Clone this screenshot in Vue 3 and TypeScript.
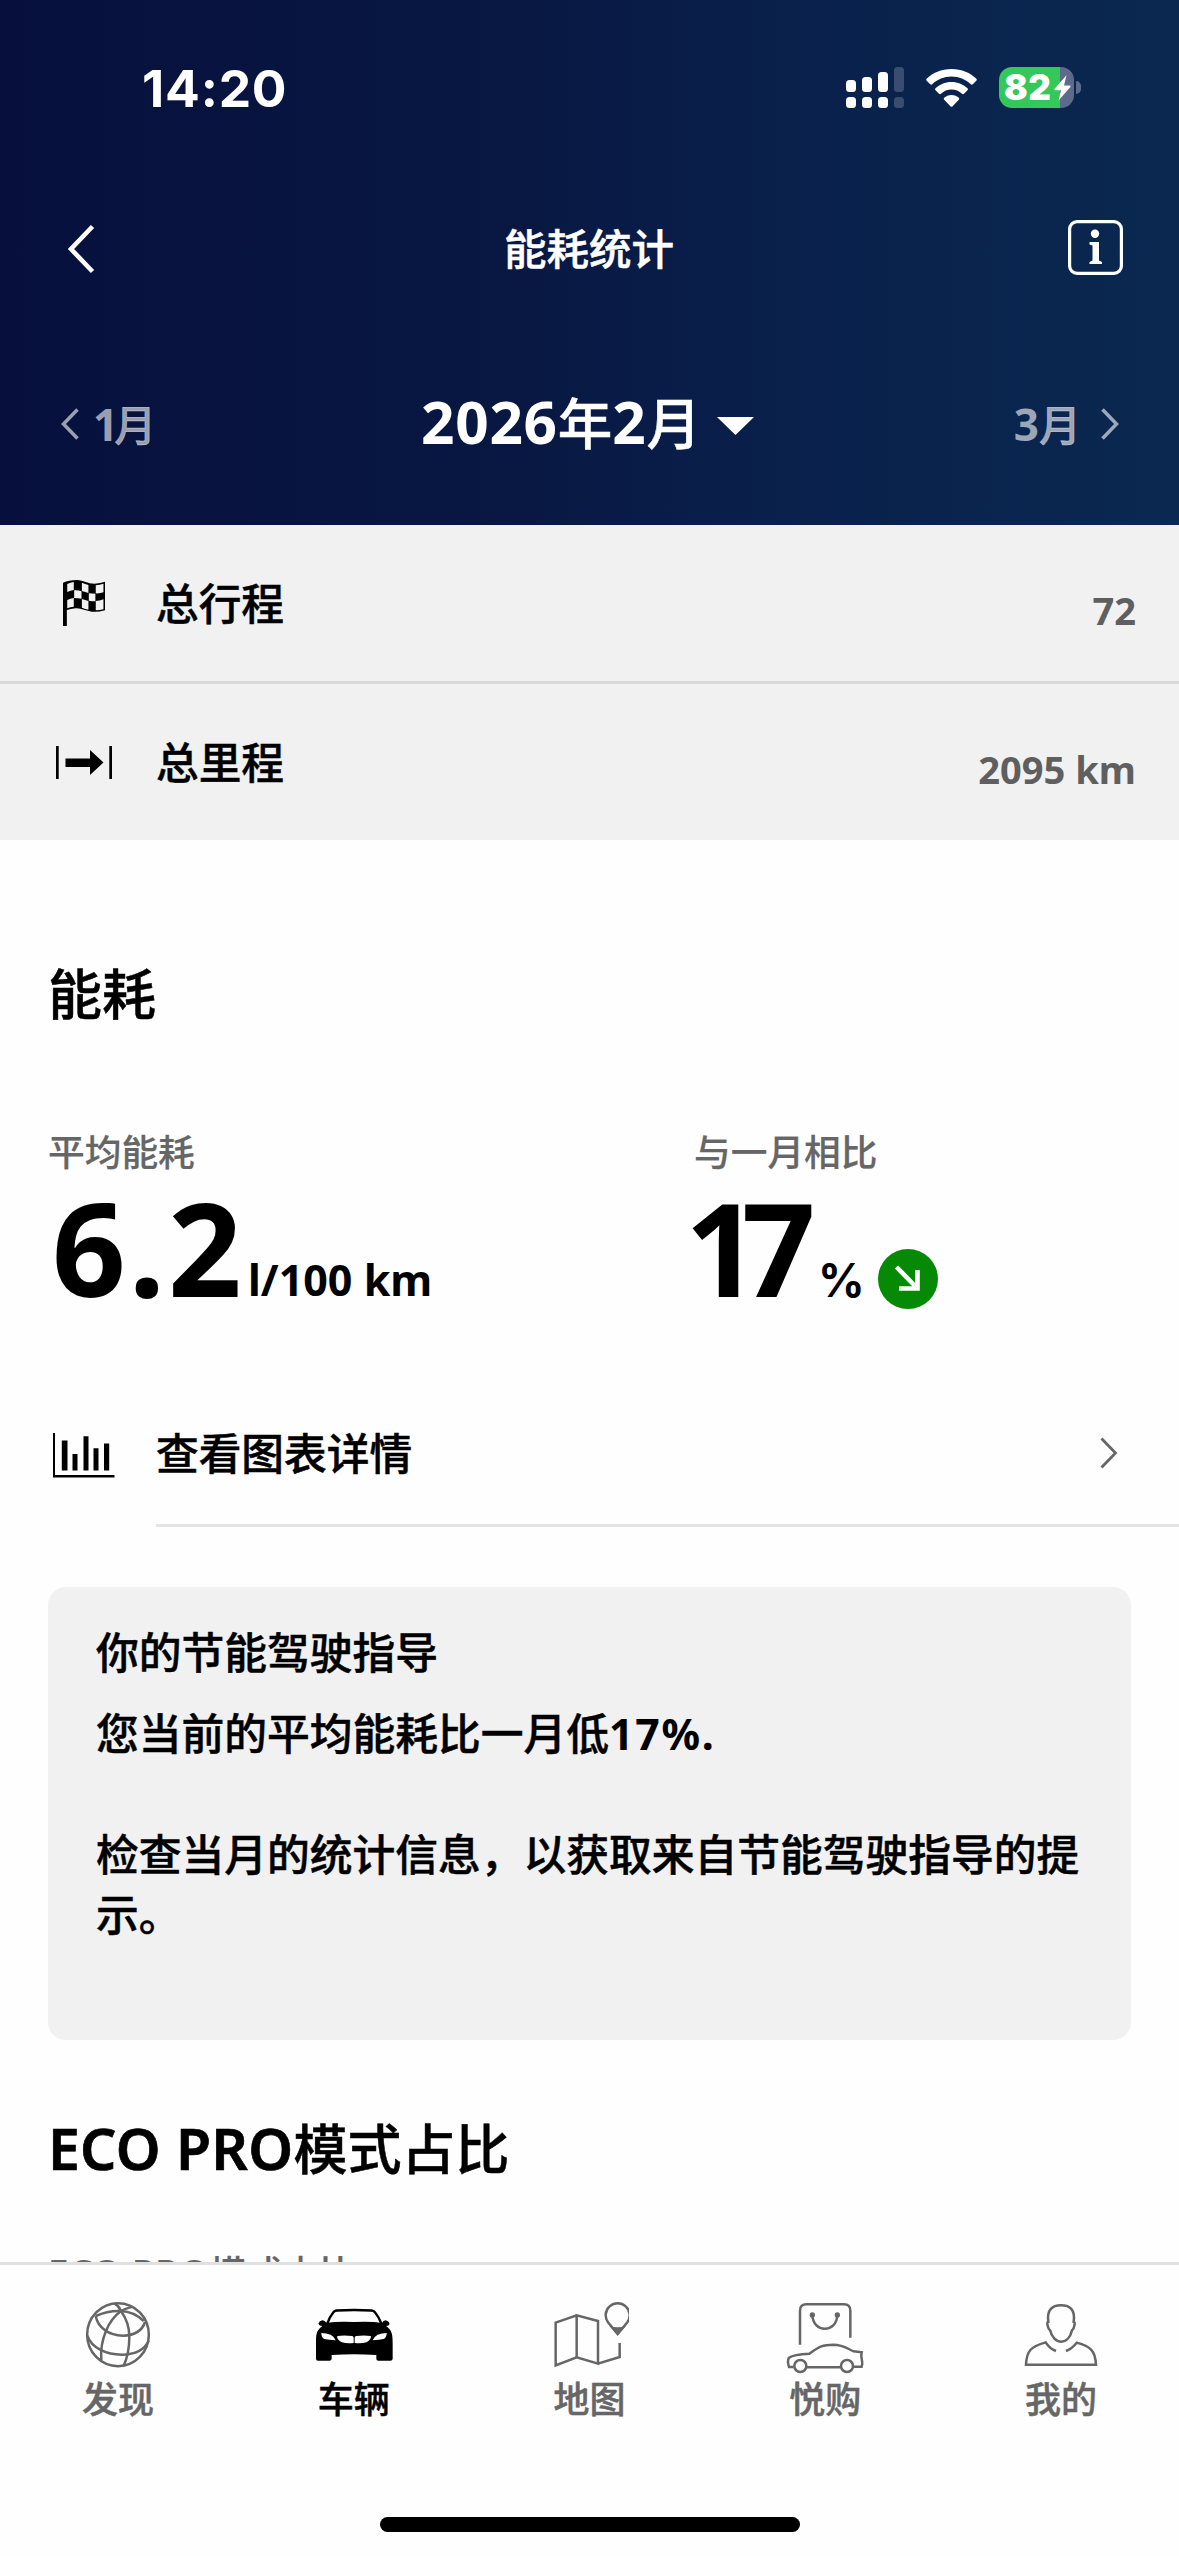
<script setup lang="ts">
interface Tab {
  id: string
  label: string
  box: string
}

const signalBars = [
  { height: 12, on: true },
  { height: 15, on: true },
  { height: 20, on: true },
  { height: 25, on: false },
]

const tabs: Tab[] = [
  { id: 'discover', label: '发现', box: '234 174 240 228' },
  { id: 'vehicle', label: '车辆', box: '941 174 240 228' },
  { id: 'map', label: '地图', box: '299 174 240 228' },
  { id: 'shop', label: '悦购', box: '1006 174 240 228' },
  { id: 'mine', label: '我的', box: '423 174 240 228' },
]
const activeTab = 'vehicle'
</script>

<template>
  <div class="screen">
    <header class="hero">
      <div class="status">
        <span class="time">14:20</span>
        <div class="indicators">
          <div class="signal">
            <div v-for="(bar, i) in signalBars" :key="i" class="signal-col" :class="{ off: !bar.on }">
              <i class="bar" :style="{ height: bar.height + 'px' }"></i>
              <i class="dot"></i>
            </div>
          </div>
          <svg class="wifi" viewBox="0 0 51 38" width="51" height="38" fill="#fff">
            <path d="M25.500 0 C35.500 0 44.500 3.800 50.400 9.800 Q51.200 10.800 50.300 11.800 L46.800 15.300 Q45.800 16.200 44.800 15.300 C39.700 10.500 33 7.600 25.500 7.600 C18 7.600 11.300 10.500 6.200 15.300 Q5.200 16.200 4.200 15.300 L0.700 11.800 Q-0.200 10.800 0.600 9.800 C6.500 3.800 15.500 0 25.500 0Z" />
            <path d="M25.500 13 C32 13 37.500 15.500 41.500 19.300 Q42.500 20.300 41.500 21.300 L38 24.700 Q37 25.600 36 24.700 C33.200 22.200 29.600 20.600 25.500 20.600 C21.400 20.600 17.800 22.200 15 24.700 Q14 25.600 13 24.700 L9.500 21.300 Q8.500 20.300 9.500 19.300 C13.500 15.500 19 13 25.500 13Z" />
            <path d="M25.500 26 C28.500 26 31 27.100 32.800 28.800 Q33.700 29.700 32.800 30.700 L26.600 37.200 Q25.500 38.200 24.400 37.200 L18.200 30.700 Q17.300 29.700 18.200 28.800 C20 27.100 22.500 26 25.500 26Z" />
          </svg>
          <div class="battery">
            <div class="cell">
              <span class="level">82</span>
              <svg class="bolt" viewBox="0 0 17 26" width="17" height="26" fill="#fff">
                <path d="M12.500 0.300 L0.400 14 Q0 15.200 1.200 15.300 H7 L4.600 25.600 L16.600 11.800 Q17 10.500 15.800 10.400 H10Z" />
              </svg>
            </div>
            <i class="nub"></i>
          </div>
        </div>
      </div>

      <nav class="navbar">
        <svg class="back" viewBox="0 0 28 50" width="28" height="50">
          <path d="M25.500 2.500 L4 25 L25.500 47.500" fill="none" stroke="#fff" stroke-width="4.600" />
        </svg>
        <h1>能耗统计</h1>
        <svg class="info" viewBox="0 0 55 55" width="55" height="55">
          <rect x="1.600" y="1.600" width="51.800" height="51.800" rx="7.500" fill="none" stroke="#fff" stroke-width="3.200" />
          <circle cx="27" cy="13.700" r="4.200" fill="#fff" />
          <path d="M21.500 22 H31 V40.500 L34 42 V44 H21.500 V42 L24.500 40.500 V25.500 L21.500 24.500Z" fill="#fff" />
        </svg>
      </nav>

      <div class="months">
        <div class="month prev">
          <svg viewBox="0 0 18 32" width="18" height="32"><path d="M16.500 1.500 L2.500 16 L16.500 30.500" /></svg>
          <span><b class="lat one">1</b>月</span>
        </div>
        <div class="current">
          <span><b class="lat">2026</b>年<b class="lat">2</b>月</span>
          <svg viewBox="0 0 37 18" width="37" height="18"><path d="M0 0H37L18.500 18Z" fill="#fff" /></svg>
        </div>
        <div class="month next">
          <span><b class="lat">3</b>月</span>
          <svg viewBox="0 0 18 32" width="18" height="32"><path d="M1.500 1.500 L15.500 16 L1.500 30.500" /></svg>
        </div>
      </div>
    </header>

    <main class="content">
      <div class="totals">
        <div class="total">
          <div class="total-icon">
            <svg viewBox="165 150 109 138" width="42" height="46" preserveAspectRatio="none">
              <path d="M165 158 Q180 150 201 150 C219 151 228 161 247 161 Q262 160 274 155 V241 Q256 247 240 245 C224 243 212 234 198 235 Q184 237 175 240 V288 H165Z" />
              <g fill="#f1f1f1">
                <path d="M176 162 Q184 157 193 156 V180 Q184 181 176 186Z" />
                <path d="M214 158 Q223 162 231 165 V189 Q223 186 214 183Z" />
                <path d="M250 166 Q260 165 270 161 V187 Q260 191 250 190Z" />
                <path d="M194 181 Q204 180 213 184 V206 Q204 204 194 204Z" />
                <path d="M232 190 Q241 191 249 191 V214 Q241 214 232 212Z" />
                <path d="M176 210 Q184 206 193 204 V230 Q184 231 176 235Z" />
                <path d="M214 207 Q223 210 231 213 V239 Q223 237 214 233Z" />
                <path d="M250 213 Q260 213 270 208 V238 Q260 241 250 241Z" />
              </g>
            </svg>
          </div>
          <span class="total-label">总行程</span>
          <span class="total-value">72</span>
        </div>
        <div class="total">
          <div class="total-icon">
            <svg viewBox="0 0 56 33" width="56" height="33">
              <path d="M0 0H2.700V33H0Z M53.300 0H56V33H53.300Z M9.500 12.500H34V4L47.500 16.500L34 29V21H9.500Z" />
            </svg>
          </div>
          <span class="total-label">总里程</span>
          <span class="total-value">2095 km</span>
        </div>
      </div>

      <section class="usage">
        <h2>能耗</h2>
        <div class="metrics">
          <div class="metric">
            <span class="caption">平均能耗</span>
            <div class="reading">
              <span class="big first">6.2</span><span class="unit">l/100 km</span>
            </div>
          </div>
          <div class="metric">
            <span class="caption">与一月相比</span>
            <div class="reading">
              <span class="big second">17</span><span class="unit pct">%</span>
              <svg class="trend" viewBox="0 0 60 60" width="60" height="60">
                <circle cx="30" cy="30" r="30" fill="#068a06" />
                <path d="M18.500 18 L38.500 38.500 M21 39.500 H39.500 V21" fill="none" stroke="#fff" stroke-width="4.600" />
              </svg>
            </div>
          </div>
        </div>
      </section>

      <div class="details">
        <svg class="chart" viewBox="0 0 62 45" width="62" height="45">
          <path d="M0 0H2V42H61.500V44.500H0Z M8.800 7.600H14.500V37.500H8.800Z M19.500 21H24.500V37.500H19.500Z M30.500 3.300H35.500V37.500H30.500Z M40.500 15.300H45.500V37.500H40.500Z M51 10.600H56.200V37.500H51Z" />
        </svg>
        <div class="details-row">
          <span>查看图表详情</span>
          <svg viewBox="0 0 18 32" width="18" height="32"><path d="M1.500 1.500 L15.500 16 L1.500 30.500" fill="none" stroke="#666" stroke-width="2.800" /></svg>
        </div>
      </div>

      <div class="card">
        <p class="card-title">你的节能驾驶指导</p>
        <p class="card-lead">您当前的平均能耗比一月低<b class="lat">17%.</b></p>
        <p class="card-hint">检查当月的统计信息，以获取来自节能驾驶指导的提示。</p>
      </div>

      <section class="eco">
        <h2><span class="lat">ECO PRO</span>模式占比</h2>
        <span class="caption"><b class="lat">ECO PRO</b>模式占比</span>
      </section>
    </main>

    <footer class="tabbar">
      <div class="tabs">
        <div v-for="tab in tabs" :key="tab.id" class="tab" :class="{ active: tab.id === activeTab }">
          <svg :viewBox="tab.box" width="80" height="76" fill="none" stroke="currentColor" stroke-width="7.500">
            <g v-if="tab.id === 'discover'">
              <ellipse cx="354" cy="284" rx="92.500" ry="94.500" />
              <path d="M287 228 Q325 211 363 213 Q402 215 431 243" />
              <path d="M344 191 Q357 198 363 213 Q388 248 388 290 Q388 340 371 377" />
              <path d="M398 200 Q376 206 363 213 Q333 235 318 273 Q300 315 304 362" />
              <path d="M287 228 C294 262 325 287 369 287 C403 286 427 271 435 246" />
              <path d="M262 287 C275 325 320 344 365 344 C403 343 434 329 446 302" />
            </g>
            <g v-else-if="tab.id === 'vehicle'" fill="currentColor" stroke="none">
              <path
                fill-rule="evenodd"
                d="M978 248 Q983 232 997 214 Q1000 209 1008 208 Q1061 205 1114 208 Q1123 209 1126 214 Q1139 231 1146 248 Q1148 242 1156 241 Q1166 243 1168 251 Q1166 258 1157 258 Q1170 266 1174 280 Q1177 290 1177 310 V356 Q1177 362 1170 362 H1134 Q1128 362 1128 356 V345 Q1062 340 994 345 V356 Q994 362 987 362 H953 Q947 362 947 356 V300 Q947 282 952 273 Q957 264 966 258 Q957 258 954 251 Q957 242 966 241 Q974 242 978 248Z M986 248 Q1010 244 1062 246 Q1113 244 1138 248 Q1133 234 1121 219 Q1118 215 1112 215 Q1062 212 1011 215 Q1005 215 1002 219 Q991 233 986 248Z M963 281 Q964 293 972 297 Q985 300 1006 301 Q1001 289 991 284 Q978 279 963 279Z M1159 281 Q1158 293 1150 297 Q1137 300 1117 301 Q1122 289 1132 284 Q1144 279 1159 279Z M1012 288 Q1030 285 1056 288 Q1060 289 1060 294 V309 Q1038 311 1025 307 Q1012 301 1010 290Z M1111 288 Q1092 285 1067 288 Q1063 289 1063 294 V309 Q1085 311 1098 307 Q1110 301 1112 290Z"
              />
            </g>
            <g v-else-if="tab.id === 'map'">
              <path d="M382 226 L319 248 V376 L382 352 L446 371 V243 L382 226 V352 M446 371 L511 351 V309" />
              <path d="M476 247 A36 36 0 1 1 534 247 L505 282Z" />
              <path d="M480 258 Q505 266 530 258 L505 286Z" fill="currentColor" stroke="none" />
            </g>
            <g v-else-if="tab.id === 'shop'">
              <path d="M1051 314 V212 Q1051 193 1070 193 H1183 Q1202 193 1202 212 V293" />
              <path d="M1088 225 C1090 280 1161 280 1163 225" />
              <circle cx="1088" cy="225" r="8" fill="currentColor" stroke="none" />
              <circle cx="1163" cy="225" r="8" fill="currentColor" stroke="none" />
              <path d="M1032 381 H1018 Q1012 364 1018 353 Q1032 343 1079 341 C1110 319 1120 314 1150 314 C1185 315 1190 325 1212 334 L1236 337 Q1233 348 1237 362 Q1239 372 1236 380 H1212 M1071 382 H1172" />
              <circle cx="1052" cy="378" r="18" />
              <circle cx="1192" cy="378" r="18" />
            </g>
            <g v-else>
              <path d="M505 245 C500 210 516 196 543 196 C571 196 586 210 581 245 Q586 246 583 257 Q581 268 576 271 C571 291 559 305 544 305 C528 305 514 289 511 272 Q505 267 503 257 Q500 246 505 245Z" />
              <path d="M528 333 Q509 326 497 307 C455 319 440 330 438 374 H648 C646 330 630 319 590 308 Q576 326 558 333" />
            </g>
          </svg>
          <span>{{ tab.label }}</span>
        </div>
      </div>
      <div class="home"></div>
    </footer>
  </div>
</template>

<style>
body {
  margin: 0;
  background: #fff;
}
</style>

<style scoped>
.screen {
  width: 1179px;
  height: 2556px;
  display: flex;
  flex-direction: column;
  overflow: hidden;
  background: #fefefe;
  color: #000;
  font-family: 'Noto Sans CJK SC', sans-serif;
  font-weight: 500;
  -webkit-text-stroke: 0.500px currentColor;
}
svg {
  display: block;
  flex: none;
}
h1,
h2,
p {
  margin: 0;
  font-weight: 500;
}
.lat,
.time,
.level,
.total-value,
.big,
.unit {
  -webkit-text-stroke: 0;
}
.lat {
  font-family: 'Noto Sans', sans-serif;
  font-weight: 700;
  line-height: 1;
}

.hero {
  height: 525px;
  flex: none;
  color: #fff;
  background: linear-gradient(90deg, #07103c 0%, #081843 45%, #09204b 65%, #0a2850 100%);
}
.status {
  height: 176px;
  display: flex;
  justify-content: space-between;
  box-sizing: border-box;
  padding: 67px 98px 0 142px;
}
.time {
  font: 700 51.500px/42px Inter, sans-serif;
  letter-spacing: 0.800px;
}
.indicators {
  display: flex;
  align-items: flex-start;
}
.signal {
  display: flex;
  gap: 6px;
  height: 41px;
}
.signal-col {
  width: 10px;
  display: flex;
  flex-direction: column;
  justify-content: flex-end;
  gap: 5px;
}
.signal-col i {
  border-radius: 3.500px;
  background: #fff;
}
.signal-col .dot {
  height: 11px;
}
.signal-col.off i {
  background: #3a4d70;
}
.wifi {
  margin: 2px 22px 0 22px;
}
.battery {
  display: flex;
  align-items: center;
  gap: 2px;
}
.cell {
  width: 75px;
  height: 41px;
  border-radius: 13px;
  display: flex;
  align-items: center;
  box-sizing: border-box;
  padding-left: 5px;
  background: linear-gradient(90deg, #34c759 82%, #5d6a8c 82%);
}
.level {
  width: 50px;
  font: 900 35px/41px Inter, sans-serif;
  letter-spacing: 0.500px;
}
.nub {
  width: 5px;
  height: 13px;
  border-radius: 0 5px 5px 0;
  background: #5d6a8c;
}

.navbar {
  height: 146px;
  display: flex;
  align-items: center;
  justify-content: space-between;
  padding: 0 56px 0 67px;
}
.navbar h1 {
  font-size: 42.500px;
  line-height: 60px;
  margin: -5px 0 0 15px;
}
.info {
  margin-top: -3px;
}

.months {
  height: 203px;
  display: flex;
  align-items: flex-start;
  justify-content: space-between;
  box-sizing: border-box;
  padding: 66px 60px 0 61px;
}
.month {
  display: flex;
  align-items: center;
  height: 72px;
  font-size: 42px;
  line-height: 72px;
  color: rgba(255, 255, 255, 0.6);
}
.month span {
  margin-top: -3px;
}
.month .lat {
  font-size: 44px;
}
.month .one {
  letter-spacing: -4px;
}
.month svg {
  fill: none;
  stroke: currentColor;
  stroke-width: 3.500px;
}
.prev {
  gap: 14px;
}
.next {
  gap: 20px;
}
.current {
  display: flex;
  align-items: center;
  gap: 16px;
  height: 72px;
  margin-left: 5px;
  font-size: 54.500px;
  line-height: 72px;
}
.current span {
  margin-top: -7px;
}
.current .lat {
  font-size: 58.500px;
  letter-spacing: 0.700px;
}
.current svg {
  margin-top: 4px;
}

.content {
  flex: 1;
  min-height: 0;
  overflow: hidden;
}
.totals {
  background: #f1f1f1;
}
.total {
  height: 156px;
  display: flex;
  align-items: center;
}
.total + .total {
  border-top: 3px solid #d8d8d8;
}
.total-icon {
  width: 156px;
  box-sizing: border-box;
  display: flex;
  justify-content: center;
  padding-left: 12px;
}
.total-label {
  flex: 1;
  margin-top: -4px;
  font-size: 42.700px;
  line-height: 60px;
}
.total-value {
  margin: 13px 43px 0 0;
  font: 700 38.100px/60px 'Noto Sans', sans-serif;
  color: #5f5f5f;
}

.usage {
  padding: 116px 48px 0;
}
h2 {
  font-size: 54px;
  line-height: 72px;
}
.metrics {
  display: flex;
  margin-top: 96px;
}
.metric {
  width: 646px;
  flex: none;
}
.metric + .metric {
  width: 437px;
}
.caption {
  display: block;
  font-size: 36.700px;
  line-height: 52px;
  color: #666;
  -webkit-text-stroke: 0.200px currentColor;
}
.caption .lat {
  letter-spacing: 0.500px;
}
.reading {
  display: flex;
  height: 130px;
  margin-top: 20px;
}
.big {
  font: 700 129px/130px 'Noto Sans', sans-serif;
  margin-top: -14px;
}
.big.first {
  width: 196px;
  margin-left: 4px;
  letter-spacing: 3px;
}
.big.second {
  width: 133px;
  margin-left: -9px;
  letter-spacing: -17px;
}
.unit {
  font: 700 43px/60px 'Noto Sans', sans-serif;
  margin-top: 54px;
}
.unit.pct {
  width: 60px;
  margin-top: 54px;
  font-family: Inter, sans-serif;
  font-size: 46px;
}
.trend {
  margin-top: 53px;
}

.details {
  display: flex;
  margin-top: 60px;
}
.chart {
  margin: 47px 41px 0 53px;
}
.details-row {
  flex: 1;
  height: 134px;
  display: flex;
  align-items: center;
  justify-content: space-between;
  padding: 0 61px 4px 0;
  border-bottom: 3px solid #e4e4e4;
  font-size: 42.700px;
  line-height: 60px;
}
.details-row span {
  margin-top: -5px;
}

.card {
  margin: 60px 48px 0;
  height: 453px;
  box-sizing: border-box;
  padding: 33px 48px 0;
  border-radius: 18px;
  background: #f1f1f1;
  font-size: 42.750px;
  line-height: 60px;
}
.card-lead {
  margin-top: 21px;
}
.card-lead .lat {
  letter-spacing: 1.800px;
}
.card-hint {
  margin-top: 61px;
}

.eco {
  padding: 71px 48px 0;
}
.eco h2 .lat {
  font-size: 57px;
  font-weight: 600;
  letter-spacing: 0.300px;
  -webkit-text-stroke: 0.700px currentColor;
}
.eco .caption {
  margin-top: 62px;
}

.tabbar {
  height: 294px;
  flex: none;
  box-sizing: border-box;
  border-top: 3px solid #e0e0e0;
  background: #fefefe;
}
.tabs {
  display: flex;
  height: 252px;
}
.tab {
  flex: 1;
  display: flex;
  flex-direction: column;
  align-items: center;
  box-sizing: border-box;
  padding-top: 33px;
  color: #666;
  font-size: 36px;
  line-height: 46px;
}
.tab.active {
  color: #000;
}
.home {
  width: 420px;
  height: 15px;
  margin: 0 auto;
  border-radius: 8px;
  background: #000;
}
</style>
